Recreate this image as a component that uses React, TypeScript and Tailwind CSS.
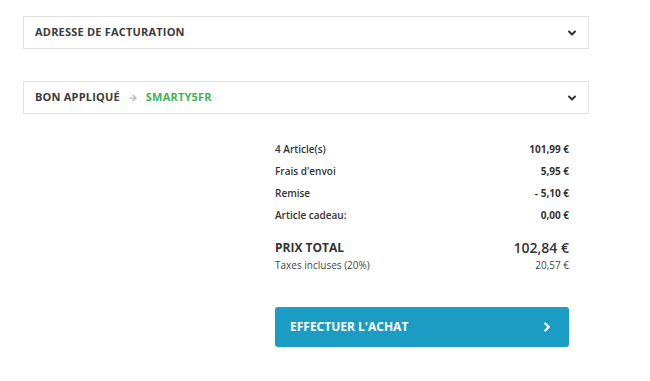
import React from 'react';
import { ChevronDown, ChevronRight, ArrowRight } from 'lucide-react';

const font = { fontFamily: '"Open Sans", "Liberation Sans", sans-serif' };

const Row = ({ label, value }: { label: string; value: string }) => (
  <div className="flex h-[22px] items-center justify-between text-[10px] text-[#333]">
    <span className="font-semibold">{label}</span>
    <span className="font-bold">{value}</span>
  </div>
);

export default function App() {
  return (
    <div className="min-h-[381px] w-[650px] bg-white font-['Open_Sans','Liberation_Sans',sans-serif]" style={font}>
      <div className="w-[589px] pl-[23px] pt-[16px]">
        <div className="flex h-[33px] items-center justify-between border border-[#e2e2e2] pl-[11px] pr-[10px]">
          <span className="text-[11px] font-bold uppercase tracking-[0.2px] text-[#3a3a3a]">Adresse de facturation</span>
          <ChevronDown size={12} strokeWidth={4} className="text-[#333]" />
        </div>

        <div className="mt-[32px] flex h-[33px] items-center justify-between border border-[#e2e2e2] pl-[11px] pr-[10px]">
          <div className="flex items-center gap-[8px] text-[11px] font-bold uppercase tracking-[0.2px]">
            <span className="text-[#3a3a3a]">Bon appliqué</span>
            <ArrowRight size={10} strokeWidth={3} className="text-[#b5b5b5]" />
            <span className="text-[#3fb34f]">Smarty5FR</span>
          </div>
          <ChevronDown size={12} strokeWidth={4} className="text-[#333]" />
        </div>

        <div className="flex justify-end pr-[20px]">
          <div className="w-[294px] pt-[24px]">
            <Row label="4 Article(s)" value="101,99 €" />
            <Row label="Frais d'envoi" value="5,95 €" />
            <Row label="Remise" value="- 5,10 €" />
            <Row label="Article cadeau:" value="0,00 €" />

            <div className="mt-[11px] flex items-center justify-between text-[#333]">
              <span className="text-[12px] font-bold uppercase">Prix total</span>
              <span className="text-[14px] font-semibold">102,84 €</span>
            </div>
            <div className="flex items-center justify-between text-[10px] text-[#444]">
              <span>Taxes incluses (20%)</span>
              <span>20,57 €</span>
            </div>

            <button className="mt-[34px] flex h-[40px] w-full items-center justify-between rounded-[3px] bg-[#1a9cc5] pl-[15px] pr-[15px] text-white">
              <span className="text-[12px] font-bold uppercase">Effectuer l'achat</span>
              <ChevronRight size={14} strokeWidth={4} />
            </button>
          </div>
        </div>
      </div>
    </div>
  );
}
